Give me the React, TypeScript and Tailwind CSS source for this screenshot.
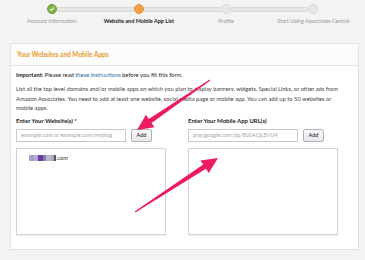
import React from 'react';

const steps = [
  { label: 'Account Information', state: 'done' },
  { label: 'Website and Mobile App List', state: 'active' },
  { label: 'Profile', state: 'todo' },
  { label: 'Start Using Associates Central', state: 'todo' },
];

function StepDot({ state }: { state: string }) {
  if (state === 'done') {
    return (
      <div className="w-[10px] h-[10px] rounded-full bg-[#7db343] border border-[#6a9e35] flex items-center justify-center shrink-0">
        <svg width="6" height="6" viewBox="0 0 6 6">
          <path d="M1 3.2 L2.4 4.5 L5 1.5" stroke="#fff" strokeWidth="1.1" fill="none" />
        </svg>
      </div>
    );
  }
  if (state === 'active') {
    return <div className="w-[10px] h-[10px] rounded-full bg-[#f0a244] border border-[#e2913a] shrink-0" />;
  }
  return <div className="w-[10px] h-[10px] rounded-full bg-[#e7e7e7] border border-[#d6d6d6] shrink-0" />;
}

function UrlColumn({ label, placeholder, children }: { label: string; placeholder: string; children?: React.ReactNode }) {
  return (
    <div className="flex flex-col">
      <div className="text-[6px] font-bold text-[#222] leading-[8px] h-[8px]">{label}</div>
      <div className="flex items-center gap-[5px] mt-[4px]">
        <div className="w-[110px] h-[13px] border border-[#c9c9c9] bg-white flex items-center px-[4px] text-[5.5px] text-[#a6a6a6]">
          {placeholder}
        </div>
        <div className="w-[21px] h-[13px] border border-[#adb1b8] rounded-[2px] bg-gradient-to-b from-[#f7f8fa] to-[#e7e9ec] flex items-center justify-center text-[5.5px] text-[#111]">
          Add
        </div>
      </div>
      <div className="w-[150px] h-[87px] border border-[#d4d4d4] bg-white mt-[6px] shadow-[0_1px_1px_rgba(0,0,0,0.06)]">
        {children}
      </div>
    </div>
  );
}

export default function App() {
  return (
    <div className="relative w-[365px] h-[260px] bg-[#f3f3f3] overflow-hidden font-['Lato',sans-serif]">
      {/* Stepper */}
      <div className="pt-[4px] h-[43px]">
        <div className="flex items-center w-[271px] ml-[47px]">
          {steps.map((s, i) => (
            <React.Fragment key={s.label}>
              <StepDot state={s.state} />
              {i < steps.length - 1 && (
                <div className="flex-1 h-[5px] bg-[#e6e6e6] border-y border-[#d9d9d9]" />
              )}
            </React.Fragment>
          ))}
        </div>
        <div className="grid grid-cols-4 w-[349px] ml-[8px] mt-[3px]">
          {steps.map((s) => (
            <div
              key={s.label}
              className={
                s.state === 'active'
                  ? 'text-center text-[5.5px] leading-[8px] font-bold text-[#222] whitespace-nowrap'
                  : 'text-center text-[5.5px] leading-[8px] text-[#9a9a9a] whitespace-nowrap'
              }
            >
              {s.label}
            </div>
          ))}
        </div>
      </div>

      {/* Card */}
      <div className="ml-[10px] w-[349px] h-[207px] bg-white border border-[#e2e2e2]">
        <div className="h-[22px] border-b border-[#e3e3e3] bg-[#fcfcfc] flex items-center px-[6px]">
          <span className="text-[6.5px] font-bold text-[#e8982c]">Your Websites and Mobile Apps</span>
        </div>
        <div className="px-[5px] pt-[4px]">
          <p className="text-[5.8px] leading-[9px] text-[#222]">
            <span className="font-bold">Important:</span> Please read{' '}
            <span className="text-[#1a6aa8]">these instructions</span> before you fill this form.
          </p>
          <p className="text-[5.8px] leading-[9.5px] text-[#444] mt-[5px] pr-[4px]">
            List all the top level domains and/or mobile apps on which you plan to display banners, widgets, Special Links, or other ads from
            Amazon Associates. You need to add at least one website, social media page or mobile app. You can add up to 50 websites or
            mobile apps.
          </p>
          <div className="flex gap-[22px] mt-[4px]">
            <UrlColumn label="Enter Your Website(s) *" placeholder="example.com or example.com/myblog">
              <div className="flex items-center mt-[6px] ml-[12px] h-[6px]">
                <div className="w-[5px] h-[6px] bg-[#a99cd0]" />
                <div className="w-[4px] h-[6px] bg-[#b3a8d8]" />
                <div className="w-[5px] h-[6px] bg-[#6a3d9c]" />
                <div className="w-[3px] h-[6px] bg-[#8d7ab8]" />
                <div className="w-[5px] h-[6px] bg-[#b8bcc8]" />
                <div className="w-[3px] h-[6px] bg-[#a9adb8]" />
                <div className="w-[2px] h-[6px] bg-[#4f5563]" />
                <span className="text-[5.8px] text-[#333] leading-[6px]">.com</span>
              </div>
            </UrlColumn>
            <UrlColumn label="Enter Your Mobile App URL(s)" placeholder="play.google.com/dp/B00AQL8VU4" />
          </div>
        </div>
      </div>

      {/* Annotation arrows */}
      <svg className="absolute inset-0 pointer-events-none" width="365" height="260" viewBox="0 0 365 260">
        <polygon
          points="210.3,80.5 151.6,123.1 154.4,127.2 137,130 146,114.8 148.8,118.9 209.7,79.5"
          fill="#ec1c5e"
        />
        <polygon
          points="135.3,212.5 206,168.8 208.7,173 218,158 200.5,160.4 203.2,164.6 134.7,211.5"
          fill="#ec1c5e"
        />
      </svg>
    </div>
  );
}
